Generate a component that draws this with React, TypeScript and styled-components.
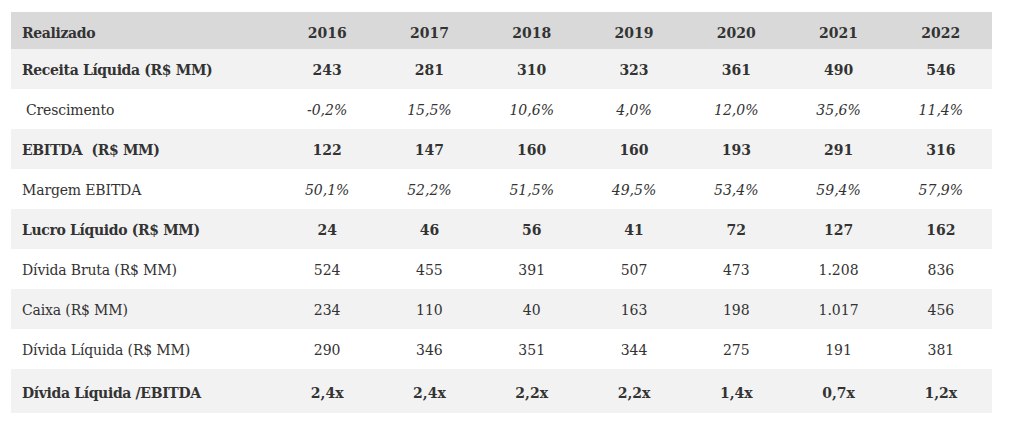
import React from 'react';
import styled, { createGlobalStyle } from 'styled-components';

const GlobalStyle = createGlobalStyle`
  html, body {
    margin: 0;
    padding: 0;
    background: #ffffff;
  }
  body {
    font-family: 'DejaVu Serif', 'Liberation Serif', serif;
    color: #333333;
  }
`;

const Page = styled.div`
  padding: 12px 0 0 11px;
  width: 1011px;
  height: 435px;
  box-sizing: border-box;
`;

const Table = styled.div`
  display: grid;
  grid-template-columns: 265px repeat(7, 1fr);
  width: 981px;
`;

const Row = styled.div<{ $bg: string; $h: number; $shift: number }>`
  display: contents;
  > div {
    background: ${(p) => p.$bg};
    height: ${(p) => p.$h}px;
    padding-top: ${(p) => p.$shift}px;
    box-sizing: border-box;
  }
`;

const Label = styled.div<{ $bold?: boolean; $indent?: boolean }>`
  display: flex;
  align-items: center;
  padding-left: ${(p) => (p.$indent ? 15 : 11)}px;
  font-size: 14px;
  font-weight: ${(p) => (p.$bold ? 700 : 400)};
  letter-spacing: ${(p) => (p.$bold ? -0.35 : -0.15)}px;
  white-space: pre;
`;

const Cell = styled.div<{ $bold?: boolean; $italic?: boolean }>`
  display: flex;
  align-items: center;
  justify-content: center;
  font-size: 14px;
  font-weight: ${(p) => (p.$bold ? 700 : 400)};
  font-style: ${(p) => (p.$italic ? 'italic' : 'normal')};
`;

type RowData = {
  label: string;
  values: string[];
  bold?: boolean;
  italic?: boolean;
  indent?: boolean;
  bg: string;
  h: number;
  shift?: number;
};

const GRAY = '#f2f2f2';
const WHITE = '#ffffff';

const rows: RowData[] = [
  { label: 'Realizado', values: ['2016', '2017', '2018', '2019', '2020', '2021', '2022'], bold: true, bg: '#d9d9d9', h: 37, shift: 4 },
  { label: 'Receita Líquida (R$ MM)', values: ['243', '281', '310', '323', '361', '490', '546'], bold: true, bg: GRAY, h: 40 },
  { label: 'Crescimento', values: ['-0,2%', '15,5%', '10,6%', '4,0%', '12,0%', '35,6%', '11,4%'], italic: true, indent: true, bg: WHITE, h: 40 },
  { label: 'EBITDA  (R$ MM)', values: ['122', '147', '160', '160', '193', '291', '316'], bold: true, bg: GRAY, h: 40 },
  { label: 'Margem EBITDA', values: ['50,1%', '52,2%', '51,5%', '49,5%', '53,4%', '59,4%', '57,9%'], italic: true, bg: WHITE, h: 40 },
  { label: 'Lucro Líquido (R$ MM)', values: ['24', '46', '56', '41', '72', '127', '162'], bold: true, bg: GRAY, h: 40 },
  { label: 'Dívida Bruta (R$ MM)', values: ['524', '455', '391', '507', '473', '1.208', '836'], bg: WHITE, h: 40 },
  { label: 'Caixa (R$ MM)', values: ['234', '110', '40', '163', '198', '1.017', '456'], bg: GRAY, h: 40 },
  { label: 'Dívida Líquida (R$ MM)', values: ['290', '346', '351', '344', '275', '191', '381'], bg: WHITE, h: 40 },
  { label: 'Dívida Líquida /EBITDA', values: ['2,4x', '2,4x', '2,2x', '2,2x', '1,4x', '0,7x', '1,2x'], bold: true, bg: GRAY, h: 44, shift: 3 },
];

export default function App() {
  return (
    <>
      <GlobalStyle />
      <Page>
        <Table>
          {rows.map((r) => (
            <Row key={r.label} $bg={r.bg} $h={r.h} $shift={r.shift ?? 2}>
              <Label $bold={r.bold} $indent={r.indent}>
                {r.label}
              </Label>
              {r.values.map((v, i) => (
                <Cell key={i} $bold={r.bold} $italic={r.italic}>
                  {v}
                </Cell>
              ))}
            </Row>
          ))}
        </Table>
      </Page>
    </>
  );
}
